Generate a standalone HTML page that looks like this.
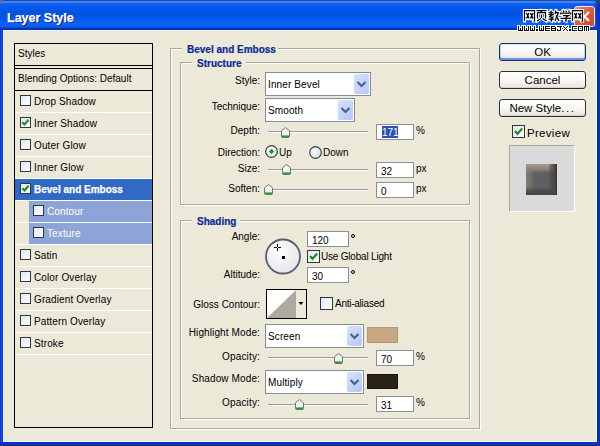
<!DOCTYPE html>
<html><head><meta charset="utf-8"><style>
html,body{margin:0;padding:0}
body{width:600px;height:446px;overflow:hidden;position:relative;background:#ECE9D8;font-family:"Liberation Sans",sans-serif;font-size:10px;color:#000}
.a{position:absolute}
.t{position:absolute;white-space:nowrap;line-height:10px;font-size:10px}
.r{text-align:right}
.b11{font-size:11px;line-height:11px}
.cb{position:absolute;width:9px;height:9px;border:1px solid #2C3644;background:linear-gradient(135deg,#E2E8F2,#FFFFFF)}
.cb13{position:absolute;width:11px;height:11px;border:1px solid #2C3644;background:linear-gradient(135deg,#E2E8F2,#FFFFFF)}
.dd{position:absolute;border:1px solid #858C96;background:#fff;box-sizing:border-box}
.ddb{position:absolute;right:1px;top:1px;bottom:1px;width:15px;background:linear-gradient(135deg,#D6E2FC,#B5C8F5);border-radius:2px}
.inp{position:absolute;border:1px solid #8A9098;background:#fff;box-sizing:border-box;height:16px;width:38px}
.gbx{position:absolute;border:1px solid #ACA899;box-shadow:inset 1px 1px 0 #fff,1px 1px 0 #fff}
.btn{position:absolute;left:499px;width:87px;height:18px;box-sizing:border-box;border:1px solid #28323E;border-radius:3px;background:linear-gradient(#FFFFFF,#F6F5F1 60%,#E6E4DC);box-shadow:inset 0 -1px 0 #D8D4C8;text-align:center;font-size:11.5px;line-height:16px}
.def{border-color:#1C3060;box-shadow:inset 0 -2px 0 #7090F0, inset 0 1px 0 #CEE7FF, inset 1px 0 0 #B8D0F8, inset -1px 0 0 #B8D0F8}
</style></head><body>
<!-- title bar -->
<div class="a" style="left:0;top:0;width:600px;height:30px;background:linear-gradient(#2848A0 0,#2848A0 1px,#3C86F4 1px,#3C86F4 3px,#1464F4 3px,#0858EC 7px,#0052E0 14px,#0558EA 19px,#0A62F6 24px,#0A5CF0 27px,#0038B8 28.5px,#0030A8 30px)"></div>
<div class="t" style="left:7px;top:12px;font-size:12.5px;line-height:12px;font-weight:bold;color:#fff;-webkit-text-stroke:0.25px #fff;text-shadow:1px 1px 0 #0A1A70">Layer Style</div>
<div class="a" style="left:594px;top:0;width:6px;height:30px;background:linear-gradient(90deg,rgba(10,48,200,0),#0A34C8 60%,#0830B0)"></div>
<div class="a" style="left:596px;top:0;width:4px;height:2px;background:#283C78"></div><div class="a" style="left:598px;top:2px;width:2px;height:2px;background:#283C78"></div>
<div class="a" style="left:0;top:0;width:3px;height:2px;background:#5A6A98"></div><div class="a" style="left:0;top:2px;width:1px;height:2px;background:#5A6A98"></div>
<!-- frame -->
<div class="a" style="left:0;top:30px;width:3px;height:416px;background:linear-gradient(90deg,#0030E0,#1050E8 1px,#1050E8 2px,#2040A0 2px)"></div>
<div class="a" style="left:597px;top:30px;width:3px;height:416px;background:#0030C0"></div>
<div class="a" style="left:0;top:442px;width:600px;height:4px;background:linear-gradient(#0A30D0 0,#0A30D0 3px,#2A2A58 3px)"></div>
<div class="a" style="left:3px;top:30px;width:1px;height:412px;background:#E8F0FF"></div>
<div class="a" style="left:3px;top:30px;width:594px;height:1px;background:#F4F4FF"></div>
<div class="a" style="left:3px;top:441px;width:594px;height:1px;background:#F4F4FF"></div>
<div class="a" style="left:596px;top:30px;width:1px;height:412px;background:#F4F4FF"></div>
<!-- left panel -->
<div class="a" style="left:14px;top:43px;width:137px;height:383px;border:1px solid #000"></div>
<div class="a" style="left:15px;top:65px;width:137px;height:1px;background:#000"></div>
<div class="a" style="left:15px;top:68px;width:137px;height:1px;background:#000"></div>
<div class="t" style="left:18px;top:49px">Styles</div>
<div class="t" style="left:18px;top:74px">Blending Options: Default</div>
<div class="a" style="left:15px;top:90px;width:137px;height:1px;background:#000"></div>
<div class="a" style="left:15px;top:112px;width:137px;height:1px;background:#FFFFFF"></div>
<div class="cb" style="left:20px;top:95px"></div>
<div class="t" style="left:34px;top:97px;letter-spacing:0.12px">Drop Shadow</div>
<div class="a" style="left:15px;top:134px;width:137px;height:1px;background:#FFFFFF"></div>
<div class="cb" style="left:20px;top:117px"><svg width="9" height="9" viewBox="0 0 9 9" style="position:absolute;left:0;top:0"><path d="M1.3 4.2 L3.5 6.5 L7.6 1.8" stroke="#1E8C1E" stroke-width="2.1" fill="none"/></svg></div>
<div class="t" style="left:34px;top:119px;letter-spacing:0.12px">Inner Shadow</div>
<div class="a" style="left:15px;top:156px;width:137px;height:1px;background:#FFFFFF"></div>
<div class="cb" style="left:20px;top:139px"></div>
<div class="t" style="left:34px;top:141px;letter-spacing:0.12px">Outer Glow</div>
<div class="a" style="left:15px;top:178px;width:137px;height:1px;background:#FFFFFF"></div>
<div class="cb" style="left:20px;top:161px"></div>
<div class="t" style="left:34px;top:163px;letter-spacing:0.12px">Inner Glow</div>
<div class="a" style="left:15px;top:179px;width:137px;height:21px;background:#316AC5"></div>
<div class="a" style="left:15px;top:200px;width:137px;height:1px;background:#FFFFFF"></div>
<div class="cb" style="left:20px;top:183px"><svg width="9" height="9" viewBox="0 0 9 9" style="position:absolute;left:0;top:0"><path d="M1.3 4.2 L3.5 6.5 L7.6 1.8" stroke="#1E8C1E" stroke-width="2.1" fill="none"/></svg></div>
<div class="t" style="left:34px;top:185px;font-weight:bold;color:#fff;-webkit-text-stroke:0.25px #fff">Bevel and Emboss</div>
<div class="a" style="left:29px;top:201px;width:123px;height:21px;background:#8CA5D6"></div>
<div class="a" style="left:15px;top:222px;width:137px;height:1px;background:#FFFFFF"></div>
<div class="cb" style="left:33px;top:205px"></div>
<div class="t" style="left:47px;top:207px;color:#fff;letter-spacing:0.12px">Contour</div>
<div class="a" style="left:29px;top:223px;width:123px;height:21px;background:#8CA5D6"></div>
<div class="a" style="left:15px;top:244px;width:137px;height:1px;background:#FFFFFF"></div>
<div class="cb" style="left:33px;top:227px"></div>
<div class="t" style="left:47px;top:229px;color:#fff;letter-spacing:0.12px">Texture</div>
<div class="a" style="left:15px;top:266px;width:137px;height:1px;background:#FFFFFF"></div>
<div class="cb" style="left:20px;top:249px"></div>
<div class="t" style="left:34px;top:251px;letter-spacing:0.12px">Satin</div>
<div class="a" style="left:15px;top:288px;width:137px;height:1px;background:#FFFFFF"></div>
<div class="cb" style="left:20px;top:271px"></div>
<div class="t" style="left:34px;top:273px;letter-spacing:0.12px">Color Overlay</div>
<div class="a" style="left:15px;top:310px;width:137px;height:1px;background:#FFFFFF"></div>
<div class="cb" style="left:20px;top:293px"></div>
<div class="t" style="left:34px;top:295px;letter-spacing:0.12px">Gradient Overlay</div>
<div class="a" style="left:15px;top:332px;width:137px;height:1px;background:#FFFFFF"></div>
<div class="cb" style="left:20px;top:315px"></div>
<div class="t" style="left:34px;top:317px;letter-spacing:0.12px">Pattern Overlay</div>
<div class="a" style="left:15px;top:354px;width:137px;height:1px;background:#FFFFFF"></div>
<div class="cb" style="left:20px;top:337px"></div>
<div class="t" style="left:34px;top:339px;letter-spacing:0.12px">Stroke</div>
<!-- middle -->
<div class="gbx" style="left:170px;top:48px;width:308px;height:379px"></div>
<div class="gbx" style="left:180px;top:62px;width:288px;height:141px"></div>
<div class="gbx" style="left:180px;top:220px;width:288px;height:197px"></div>
<div class="a" style="left:182px;top:44px;width:96px;height:9px;background:#ECE9D8"></div>
<div class="t" style="left:187px;top:45px;font-weight:bold;color:#0A2A98;-webkit-text-stroke:0.2px #0A2A98">Bevel and Emboss</div>
<div class="a" style="left:192px;top:58px;width:54px;height:9px;background:#ECE9D8"></div>
<div class="t" style="left:197px;top:59px;font-weight:bold;color:#0A2A98;-webkit-text-stroke:0.2px #0A2A98">Structure</div>
<div class="a" style="left:192px;top:216px;width:48px;height:9px;background:#ECE9D8"></div>
<div class="t" style="left:197px;top:217px;font-weight:bold;color:#0A2A98;-webkit-text-stroke:0.2px #0A2A98">Shading</div>
<div class="t r" style="left:110px;width:150px;top:76px;">Style:</div>
<div class="dd" style="left:265px;top:72px;width:106px;height:24px"><div class="ddb"><svg width="15" height="20" style="position:absolute;left:0;top:0"><path d="M3.5 8 L7.5 12 L11.5 8" stroke="#4D6185" stroke-width="2.2" fill="none"/></svg></div></div><div class="t" style="left:268px;top:80px;letter-spacing:0.12px">Inner Bevel</div>
<div class="t r" style="left:110px;width:150px;top:102px;">Technique:</div>
<div class="dd" style="left:265px;top:98px;width:90px;height:24px"><div class="ddb"><svg width="15" height="20" style="position:absolute;left:0;top:0"><path d="M3.5 8 L7.5 12 L11.5 8" stroke="#4D6185" stroke-width="2.2" fill="none"/></svg></div></div><div class="t" style="left:268px;top:106px;letter-spacing:0.12px">Smooth</div>
<div class="t r" style="left:110px;width:150px;top:126px;">Depth:</div>
<div class="a" style="left:268px;top:131px;width:100px;height:1px;background:#9C9B98"></div><div class="a" style="left:268px;top:132px;width:100px;height:1px;background:#FFFFFF"></div><svg class="a" style="left:281px;top:127px" width="9" height="11" viewBox="0 0 9 11"><path d="M0.5 9.5 V3.8 L4.5 0.5 L8.5 3.8 V9.5 Q8.5 10.5 7.5 10.5 H1.5 Q0.5 10.5 0.5 9.5 Z" fill="#EEF6EC" stroke="#6E7670" stroke-width="1"/><path d="M1 9.4 H8" stroke="#2A9A34" stroke-width="2"/></svg>
<div class="inp" style="left:376px;top:124px;width:38px"><div class="a" style="left:5px;top:1px;width:16px;height:12px;background:#2F52B0"></div><div class="t" style="left:5px;top:3px;color:#fff">171</div></div>
<div class="t" style="left:416px;top:126px;">%</div>
<div class="t r" style="left:110px;width:150px;top:148px;">Direction:</div>
<svg class="a" style="left:265px;top:145px" width="13" height="13" viewBox="0 0 13 13"><defs><radialGradient id="rg265" cx="0.4" cy="0.4" r="0.6"><stop offset="0" stop-color="#FFFFFF"/><stop offset="1" stop-color="#D6EEDA"/></radialGradient></defs><circle cx="6.5" cy="6.5" r="5.8" fill="url(#rg265)" stroke="#3C4450" stroke-width="1.2"/><path d="M6.5 3.8 L9.2 6.5 L6.5 9.2 L3.8 6.5 Z" fill="#2E8E3A"/></svg>
<div class="t" style="left:279px;top:148px;">Up</div>
<svg class="a" style="left:309px;top:146px" width="13" height="13" viewBox="0 0 13 13"><defs><radialGradient id="rg309" cx="0.4" cy="0.4" r="0.6"><stop offset="0" stop-color="#FFFFFF"/><stop offset="1" stop-color="#D8DEE6"/></radialGradient></defs><circle cx="6.5" cy="6.5" r="5.8" fill="url(#rg309)" stroke="#3C4450" stroke-width="1.2"/></svg>
<div class="t" style="left:323px;top:148px;">Down</div>
<div class="t r" style="left:110px;width:150px;top:164px;">Size:</div>
<div class="a" style="left:268px;top:169px;width:100px;height:1px;background:#9C9B98"></div><div class="a" style="left:268px;top:170px;width:100px;height:1px;background:#FFFFFF"></div><svg class="a" style="left:282px;top:164px" width="9" height="11" viewBox="0 0 9 11"><path d="M0.5 9.5 V3.8 L4.5 0.5 L8.5 3.8 V9.5 Q8.5 10.5 7.5 10.5 H1.5 Q0.5 10.5 0.5 9.5 Z" fill="#EEF6EC" stroke="#6E7670" stroke-width="1"/><path d="M1 9.4 H8" stroke="#2A9A34" stroke-width="2"/></svg>
<div class="inp" style="left:376px;top:162px;width:38px"><div class="t" style="left:4px;top:4px">32</div></div>
<div class="t" style="left:416px;top:164px;">px</div>
<div class="t r" style="left:110px;width:150px;top:184px;">Soften:</div>
<div class="a" style="left:268px;top:189px;width:100px;height:1px;background:#9C9B98"></div><div class="a" style="left:268px;top:190px;width:100px;height:1px;background:#FFFFFF"></div><svg class="a" style="left:264px;top:184px" width="9" height="11" viewBox="0 0 9 11"><path d="M0.5 9.5 V3.8 L4.5 0.5 L8.5 3.8 V9.5 Q8.5 10.5 7.5 10.5 H1.5 Q0.5 10.5 0.5 9.5 Z" fill="#EEF6EC" stroke="#6E7670" stroke-width="1"/><path d="M1 9.4 H8" stroke="#2A9A34" stroke-width="2"/></svg>
<div class="inp" style="left:376px;top:182px;width:38px"><div class="t" style="left:4px;top:4px">0</div></div>
<div class="t" style="left:416px;top:184px;">px</div>
<div class="t r" style="left:110px;width:150px;top:232px;">Angle:</div>
<svg class="a" style="left:264px;top:238px" width="38" height="38" viewBox="0 0 38 38"><defs><radialGradient id="dial" cx="0.4" cy="0.35" r="0.7"><stop offset="0" stop-color="#FFFFFF"/><stop offset="1" stop-color="#E4E4EA"/></radialGradient></defs><circle cx="19" cy="18.5" r="17" fill="url(#dial)" stroke="#565E6E" stroke-width="1.8"/><rect x="18" y="18" width="3" height="3" fill="#000"/><path d="M10 9.5 H13 M14 9.5 H17 M13.5 6 V9 M13.5 10 V13" stroke="#000" stroke-width="1"/></svg>
<div class="inp" style="left:307px;top:231px;width:42px"><div class="t" style="left:4px;top:4px">120</div></div>
<div class="a" style="left:351px;top:234px;width:2px;height:2px;border:1px solid #000;border-radius:50%"></div>
<div class="cb13" style="left:307px;top:250px"><svg width="11" height="11" viewBox="0 0 11 11" style="position:absolute;left:0;top:0"><path d="M2 5 L4.5 7.8 L9.2 2.5" stroke="#1E8C1E" stroke-width="2.2" fill="none"/></svg></div>
<div class="t" style="left:321px;top:252px;letter-spacing:-0.2px">Use Global Light</div>
<div class="t r" style="left:110px;width:150px;top:270px;">Altitude:</div>
<div class="inp" style="left:307px;top:267px;width:42px"><div class="t" style="left:4px;top:4px">30</div></div>
<div class="a" style="left:351px;top:270px;width:2px;height:2px;border:1px solid #000;border-radius:50%"></div>
<div class="t r" style="left:110px;width:150px;top:300px;">Gloss Contour:</div>
<svg class="a" style="left:266px;top:289px" width="41" height="30" viewBox="0 0 41 30"><rect x="0.5" y="0.5" width="40" height="29" fill="#ECE9D8" stroke="#000"/><rect x="1" y="1" width="29" height="28" fill="#fff"/><path d="M1 29 L30 1 V29 Z" fill="#ADAA9F"/><path d="M32.5 13 H37.5 L35 16 Z" fill="#000"/></svg>
<div class="cb13" style="left:320px;top:297px"></div>
<div class="t" style="left:335px;top:299px;letter-spacing:-0.25px">Anti-aliased</div>
<div class="t r" style="left:110px;width:150px;top:328px;letter-spacing:0.12px">Highlight Mode:</div>
<div class="dd" style="left:265px;top:324px;width:99px;height:24px"><div class="ddb"><svg width="15" height="20" style="position:absolute;left:0;top:0"><path d="M3.5 8 L7.5 12 L11.5 8" stroke="#4D6185" stroke-width="2.2" fill="none"/></svg></div></div><div class="t" style="left:268px;top:332px;letter-spacing:0.12px">Screen</div>
<div class="a" style="left:367px;top:327px;width:29px;height:14px;border:1px solid #B0987A;background:#C8A882"></div>
<div class="t r" style="left:110px;width:150px;top:352px;letter-spacing:0.15px">Opacity:</div>
<div class="a" style="left:268px;top:357px;width:100px;height:1px;background:#9C9B98"></div><div class="a" style="left:268px;top:358px;width:100px;height:1px;background:#FFFFFF"></div><svg class="a" style="left:334px;top:353px" width="9" height="11" viewBox="0 0 9 11"><path d="M0.5 9.5 V3.8 L4.5 0.5 L8.5 3.8 V9.5 Q8.5 10.5 7.5 10.5 H1.5 Q0.5 10.5 0.5 9.5 Z" fill="#EEF6EC" stroke="#6E7670" stroke-width="1"/><path d="M1 9.4 H8" stroke="#2A9A34" stroke-width="2"/></svg>
<div class="inp" style="left:376px;top:350px;width:38px"><div class="t" style="left:4px;top:4px">70</div></div>
<div class="t" style="left:416px;top:352px;">%</div>
<div class="t r" style="left:110px;width:150px;top:374px;letter-spacing:0.12px">Shadow Mode:</div>
<div class="dd" style="left:265px;top:370px;width:99px;height:24px"><div class="ddb"><svg width="15" height="20" style="position:absolute;left:0;top:0"><path d="M3.5 8 L7.5 12 L11.5 8" stroke="#4D6185" stroke-width="2.2" fill="none"/></svg></div></div><div class="t" style="left:268px;top:378px;letter-spacing:0.12px">Multiply</div>
<div class="a" style="left:367px;top:374px;width:29px;height:13px;border:1px solid #1A140E;background:#2B2218"></div>
<div class="t r" style="left:110px;width:150px;top:398px;letter-spacing:0.15px">Opacity:</div>
<div class="a" style="left:268px;top:404px;width:100px;height:1px;background:#9C9B98"></div><div class="a" style="left:268px;top:405px;width:100px;height:1px;background:#FFFFFF"></div><svg class="a" style="left:295px;top:399px" width="9" height="11" viewBox="0 0 9 11"><path d="M0.5 9.5 V3.8 L4.5 0.5 L8.5 3.8 V9.5 Q8.5 10.5 7.5 10.5 H1.5 Q0.5 10.5 0.5 9.5 Z" fill="#EEF6EC" stroke="#6E7670" stroke-width="1"/><path d="M1 9.4 H8" stroke="#2A9A34" stroke-width="2"/></svg>
<div class="inp" style="left:376px;top:396px;width:38px"><div class="t" style="left:4px;top:4px">31</div></div>
<div class="t" style="left:416px;top:398px;">%</div>
<!-- right -->
<div class="btn def" style="top:43px">OK</div>
<div class="btn" style="top:71px">Cancel</div>
<div class="btn" style="top:99px">New Style<span style="letter-spacing:1.6px">...</span></div>
<div class="cb13" style="left:512px;top:125px"><svg width="11" height="11" viewBox="0 0 11 11" style="position:absolute;left:0;top:0"><path d="M2 5 L4.5 7.8 L9.2 2.5" stroke="#1E8C1E" stroke-width="2.2" fill="none"/></svg></div>
<div class="t b11" style="left:527px;top:128px;font-size:11.5px;letter-spacing:0.3px">Preview</div>
<div class="a" style="left:509px;top:145px;width:64px;height:65px;border-top:1px solid #ACA899;border-left:1px solid #ACA899;border-right:1px solid #fff;border-bottom:1px solid #fff;background:#DADADA"></div>
<div class="a" style="left:526px;top:164px;width:31px;height:31px;background:linear-gradient(to left,#36322E 0,#4A4642 2px,rgba(74,70,66,.55) 6px,rgba(74,70,66,0) 9px),linear-gradient(to bottom,#A89E90 0,#8E8476 5px,rgba(142,132,118,0) 9px),linear-gradient(to top,#48423C 0,rgba(72,66,60,.6) 5px,rgba(72,66,60,0) 8px),linear-gradient(to right,#807870 0,rgba(128,120,112,.6) 5px,rgba(128,120,112,0) 8px),#5E6064"></div>
<!-- close button -->
<div class="a" style="left:574px;top:6px;width:19px;height:19px;border:1px solid #F4E8E0;border-radius:3px;background:linear-gradient(135deg,#F08A6A,#DC5E3C 45%,#C84828)"></div>
<svg class="a" style="left:574px;top:6px" width="21" height="21" viewBox="0 0 21 21"><path d="M6 6 L15 15 M15 6 L6 15" stroke="#fff" stroke-width="2"/></svg>
<!-- watermark -->
<svg class="a" style="left:521px;top:7px" width="66" height="17" viewBox="0 0 66 17">
<g transform="translate(3,3)" fill="none" stroke-linecap="square" stroke="#fff" stroke-width="3.2">
<g id="wmg" >
<path d="M0.5 11 V0.5 H10.5 V11 L9.5 11 M2.5 3 L5 8.5 M5 3 L2.5 8.5 M6.5 3 L9 8.5 M9 3 L6.5 8.5"/>
<path transform="translate(12,0)" d="M0.5 0.5 H10.5 M5.5 0.5 L5 2.5 M1.5 2.5 H9.5 V8.5 M1.5 2.5 V8.5 M5.5 4.5 V8 M5 8.5 L1 11 M6.5 8.5 L10.5 11"/>
<path transform="translate(24,0)" d="M0.5 2.5 H5.5 M3 0.5 V4 M0.5 4.5 H6 M5.5 4 L1 7 M2 7 H5 L3.5 8.5 V11 L2.5 10.5 M0.5 9 H6 M8 0.5 L7 4 M7.5 2.5 H11 M10.5 2.5 L7 11 M8 5.5 L11 11"/>
<path transform="translate(36,0)" d="M3 0.5 L4 2 M6 0.5 L6.3 2 M9.5 0.5 L8.5 2 M0.8 4.5 V3 H10.5 V4.5 M3 5.5 H8.5 L6 7.3 M6 7.3 V11 L4.8 10.6 M0.5 8.3 H11"/>
<path transform="translate(48,0)" d="M0.5 11 V0.5 H10.5 V11 L9.5 11 M2.5 3 L5 8.5 M5 3 L2.5 8.5 M6.5 3 L9 8.5 M9 3 L6.5 8.5"/>
</g>
</g>
</svg>

<svg class="a" style="left:521px;top:7px" width="66" height="17" viewBox="0 0 66 17">
<g transform="translate(3,3)" fill="none" stroke-linecap="butt" stroke="#000" stroke-width="1.25">
<g  >
<path d="M0.5 11 V0.5 H10.5 V11 L9.5 11 M2.5 3 L5 8.5 M5 3 L2.5 8.5 M6.5 3 L9 8.5 M9 3 L6.5 8.5"/>
<path transform="translate(12,0)" d="M0.5 0.5 H10.5 M5.5 0.5 L5 2.5 M1.5 2.5 H9.5 V8.5 M1.5 2.5 V8.5 M5.5 4.5 V8 M5 8.5 L1 11 M6.5 8.5 L10.5 11"/>
<path transform="translate(24,0)" d="M0.5 2.5 H5.5 M3 0.5 V4 M0.5 4.5 H6 M5.5 4 L1 7 M2 7 H5 L3.5 8.5 V11 L2.5 10.5 M0.5 9 H6 M8 0.5 L7 4 M7.5 2.5 H11 M10.5 2.5 L7 11 M8 5.5 L11 11"/>
<path transform="translate(36,0)" d="M3 0.5 L4 2 M6 0.5 L6.3 2 M9.5 0.5 L8.5 2 M0.8 4.5 V3 H10.5 V4.5 M3 5.5 H8.5 L6 7.3 M6 7.3 V11 L4.8 10.6 M0.5 8.3 H11"/>
<path transform="translate(48,0)" d="M0.5 11 V0.5 H10.5 V11 L9.5 11 M2.5 3 L5 8.5 M5 3 L2.5 8.5 M6.5 3 L9 8.5 M9 3 L6.5 8.5"/>
</g>
</g>
</svg>
<svg class="a" style="left:514px;top:24px" width="80" height="10" viewBox="0 0 80 10" shape-rendering="crispEdges"><path d="M3 1h3v3h-3zM7 1h3v3h-3zM3 2h3v3h-3zM7 2h3v3h-3zM3 3h3v3h-3zM5 3h3v3h-3zM7 3h3v3h-3zM3 4h3v3h-3zM5 4h3v3h-3zM7 4h3v3h-3zM3 5h3v3h-3zM4 5h3v3h-3zM5 5h3v3h-3zM6 5h3v3h-3zM7 5h3v3h-3zM9 1h3v3h-3zM13 1h3v3h-3zM9 2h3v3h-3zM13 2h3v3h-3zM9 3h3v3h-3zM11 3h3v3h-3zM13 3h3v3h-3zM9 4h3v3h-3zM11 4h3v3h-3zM13 4h3v3h-3zM9 5h3v3h-3zM10 5h3v3h-3zM11 5h3v3h-3zM12 5h3v3h-3zM13 5h3v3h-3zM15 1h3v3h-3zM19 1h3v3h-3zM15 2h3v3h-3zM19 2h3v3h-3zM15 3h3v3h-3zM17 3h3v3h-3zM19 3h3v3h-3zM15 4h3v3h-3zM17 4h3v3h-3zM19 4h3v3h-3zM15 5h3v3h-3zM16 5h3v3h-3zM17 5h3v3h-3zM18 5h3v3h-3zM19 5h3v3h-3zM21 4h3v3h-3zM22 4h3v3h-3zM21 5h3v3h-3zM22 5h3v3h-3zM24 1h3v3h-3zM28 1h3v3h-3zM24 2h3v3h-3zM28 2h3v3h-3zM24 3h3v3h-3zM26 3h3v3h-3zM28 3h3v3h-3zM24 4h3v3h-3zM26 4h3v3h-3zM28 4h3v3h-3zM24 5h3v3h-3zM25 5h3v3h-3zM26 5h3v3h-3zM27 5h3v3h-3zM28 5h3v3h-3zM30 1h3v3h-3zM31 1h3v3h-3zM32 1h3v3h-3zM33 1h3v3h-3zM34 1h3v3h-3zM30 2h3v3h-3zM30 3h3v3h-3zM31 3h3v3h-3zM32 3h3v3h-3zM33 3h3v3h-3zM34 3h3v3h-3zM30 4h3v3h-3zM30 5h3v3h-3zM31 5h3v3h-3zM32 5h3v3h-3zM33 5h3v3h-3zM34 5h3v3h-3zM36 1h3v3h-3zM37 1h3v3h-3zM38 1h3v3h-3zM39 1h3v3h-3zM36 2h3v3h-3zM40 2h3v3h-3zM36 3h3v3h-3zM37 3h3v3h-3zM38 3h3v3h-3zM39 3h3v3h-3zM40 3h3v3h-3zM36 4h3v3h-3zM40 4h3v3h-3zM36 5h3v3h-3zM37 5h3v3h-3zM38 5h3v3h-3zM39 5h3v3h-3zM40 5h3v3h-3zM42 1h3v3h-3zM43 1h3v3h-3zM44 1h3v3h-3zM45 1h3v3h-3zM46 1h3v3h-3zM45 2h3v3h-3zM45 3h3v3h-3zM42 4h3v3h-3zM45 4h3v3h-3zM42 5h3v3h-3zM43 5h3v3h-3zM44 5h3v3h-3zM45 5h3v3h-3zM48 1h3v3h-3zM52 1h3v3h-3zM49 2h3v3h-3zM51 2h3v3h-3zM50 3h3v3h-3zM49 4h3v3h-3zM51 4h3v3h-3zM48 5h3v3h-3zM52 5h3v3h-3zM54 4h3v3h-3zM55 4h3v3h-3zM54 5h3v3h-3zM55 5h3v3h-3zM57 1h3v3h-3zM58 1h3v3h-3zM59 1h3v3h-3zM60 1h3v3h-3zM61 1h3v3h-3zM57 2h3v3h-3zM57 3h3v3h-3zM57 4h3v3h-3zM57 5h3v3h-3zM58 5h3v3h-3zM59 5h3v3h-3zM60 5h3v3h-3zM61 5h3v3h-3zM63 1h3v3h-3zM64 1h3v3h-3zM65 1h3v3h-3zM66 1h3v3h-3zM67 1h3v3h-3zM63 2h3v3h-3zM67 2h3v3h-3zM63 3h3v3h-3zM67 3h3v3h-3zM63 4h3v3h-3zM67 4h3v3h-3zM63 5h3v3h-3zM64 5h3v3h-3zM65 5h3v3h-3zM66 5h3v3h-3zM67 5h3v3h-3zM69 1h3v3h-3zM70 1h3v3h-3zM71 1h3v3h-3zM72 1h3v3h-3zM73 1h3v3h-3zM69 2h3v3h-3zM71 2h3v3h-3zM73 2h3v3h-3zM69 3h3v3h-3zM71 3h3v3h-3zM73 3h3v3h-3zM69 4h3v3h-3zM71 4h3v3h-3zM73 4h3v3h-3zM69 5h3v3h-3zM71 5h3v3h-3zM73 5h3v3h-3z" fill="#fff"/><path d="M4 2h1v1h-1zM8 2h1v1h-1zM4 3h1v1h-1zM8 3h1v1h-1zM4 4h1v1h-1zM6 4h1v1h-1zM8 4h1v1h-1zM4 5h1v1h-1zM6 5h1v1h-1zM8 5h1v1h-1zM4 6h1v1h-1zM5 6h1v1h-1zM6 6h1v1h-1zM7 6h1v1h-1zM8 6h1v1h-1zM10 2h1v1h-1zM14 2h1v1h-1zM10 3h1v1h-1zM14 3h1v1h-1zM10 4h1v1h-1zM12 4h1v1h-1zM14 4h1v1h-1zM10 5h1v1h-1zM12 5h1v1h-1zM14 5h1v1h-1zM10 6h1v1h-1zM11 6h1v1h-1zM12 6h1v1h-1zM13 6h1v1h-1zM14 6h1v1h-1zM16 2h1v1h-1zM20 2h1v1h-1zM16 3h1v1h-1zM20 3h1v1h-1zM16 4h1v1h-1zM18 4h1v1h-1zM20 4h1v1h-1zM16 5h1v1h-1zM18 5h1v1h-1zM20 5h1v1h-1zM16 6h1v1h-1zM17 6h1v1h-1zM18 6h1v1h-1zM19 6h1v1h-1zM20 6h1v1h-1zM22 5h1v1h-1zM23 5h1v1h-1zM22 6h1v1h-1zM23 6h1v1h-1zM25 2h1v1h-1zM29 2h1v1h-1zM25 3h1v1h-1zM29 3h1v1h-1zM25 4h1v1h-1zM27 4h1v1h-1zM29 4h1v1h-1zM25 5h1v1h-1zM27 5h1v1h-1zM29 5h1v1h-1zM25 6h1v1h-1zM26 6h1v1h-1zM27 6h1v1h-1zM28 6h1v1h-1zM29 6h1v1h-1zM31 2h1v1h-1zM32 2h1v1h-1zM33 2h1v1h-1zM34 2h1v1h-1zM35 2h1v1h-1zM31 3h1v1h-1zM31 4h1v1h-1zM32 4h1v1h-1zM33 4h1v1h-1zM34 4h1v1h-1zM35 4h1v1h-1zM31 5h1v1h-1zM31 6h1v1h-1zM32 6h1v1h-1zM33 6h1v1h-1zM34 6h1v1h-1zM35 6h1v1h-1zM37 2h1v1h-1zM38 2h1v1h-1zM39 2h1v1h-1zM40 2h1v1h-1zM37 3h1v1h-1zM41 3h1v1h-1zM37 4h1v1h-1zM38 4h1v1h-1zM39 4h1v1h-1zM40 4h1v1h-1zM41 4h1v1h-1zM37 5h1v1h-1zM41 5h1v1h-1zM37 6h1v1h-1zM38 6h1v1h-1zM39 6h1v1h-1zM40 6h1v1h-1zM41 6h1v1h-1zM43 2h1v1h-1zM44 2h1v1h-1zM45 2h1v1h-1zM46 2h1v1h-1zM47 2h1v1h-1zM46 3h1v1h-1zM46 4h1v1h-1zM43 5h1v1h-1zM46 5h1v1h-1zM43 6h1v1h-1zM44 6h1v1h-1zM45 6h1v1h-1zM46 6h1v1h-1zM49 2h1v1h-1zM53 2h1v1h-1zM50 3h1v1h-1zM52 3h1v1h-1zM51 4h1v1h-1zM50 5h1v1h-1zM52 5h1v1h-1zM49 6h1v1h-1zM53 6h1v1h-1zM55 5h1v1h-1zM56 5h1v1h-1zM55 6h1v1h-1zM56 6h1v1h-1zM58 2h1v1h-1zM59 2h1v1h-1zM60 2h1v1h-1zM61 2h1v1h-1zM62 2h1v1h-1zM58 3h1v1h-1zM58 4h1v1h-1zM58 5h1v1h-1zM58 6h1v1h-1zM59 6h1v1h-1zM60 6h1v1h-1zM61 6h1v1h-1zM62 6h1v1h-1zM64 2h1v1h-1zM65 2h1v1h-1zM66 2h1v1h-1zM67 2h1v1h-1zM68 2h1v1h-1zM64 3h1v1h-1zM68 3h1v1h-1zM64 4h1v1h-1zM68 4h1v1h-1zM64 5h1v1h-1zM68 5h1v1h-1zM64 6h1v1h-1zM65 6h1v1h-1zM66 6h1v1h-1zM67 6h1v1h-1zM68 6h1v1h-1zM70 2h1v1h-1zM71 2h1v1h-1zM72 2h1v1h-1zM73 2h1v1h-1zM74 2h1v1h-1zM70 3h1v1h-1zM72 3h1v1h-1zM74 3h1v1h-1zM70 4h1v1h-1zM72 4h1v1h-1zM74 4h1v1h-1zM70 5h1v1h-1zM72 5h1v1h-1zM74 5h1v1h-1zM70 6h1v1h-1zM72 6h1v1h-1zM74 6h1v1h-1z" fill="#000"/></svg>
</body></html>
